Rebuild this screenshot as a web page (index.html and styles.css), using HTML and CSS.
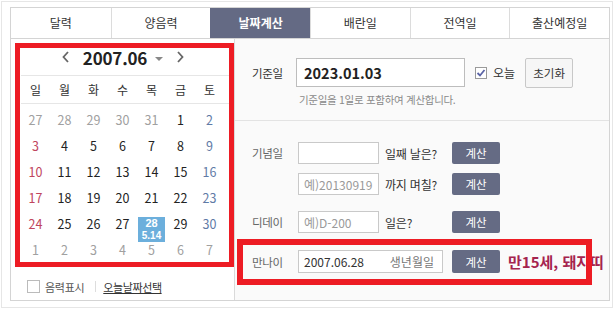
FILE: index.html
```html
<!DOCTYPE html>
<html lang="ko">
<head>
<meta charset="utf-8">
<title>날짜계산</title>
<link rel="stylesheet" href="styles.css">
</head>
<body>
<div class="page">
  <div class="box">
    <nav class="tabs">
      <div class="tab">달력</div>
      <div class="tab">양음력</div>
      <div class="tab active">날짜계산</div>
      <div class="tab">배란일</div>
      <div class="tab">전역일</div>
      <div class="tab">출산예정일</div>
    </nav>
    <div class="main">
      <section class="cal-panel">
        <div class="cal">
          <div class="cal-head">
            <svg class="chev" width="7" height="12" viewBox="0 0 7 12"><path d="M6 1 L1.5 6 L6 11" /></svg>
            <span class="ym">2007.06</span>
            <span class="tri"></span>
            <svg class="chev" width="7" height="12" viewBox="0 0 7 12"><path d="M1 1 L5.5 6 L1 11" /></svg>
          </div>
          <div class="dow">
            <span>일</span><span>월</span><span>화</span><span>수</span><span>목</span><span>금</span><span>토</span>
          </div>
          <div class="days">
            <span class="d o">27</span><span class="d o">28</span><span class="d o">29</span><span class="d o">30</span><span class="d o">31</span><span class="d">1</span><span class="d sat">2</span>
            <span class="d sun">3</span><span class="d">4</span><span class="d">5</span><span class="d">6</span><span class="d">7</span><span class="d">8</span><span class="d sat">9</span>
            <span class="d sun">10</span><span class="d">11</span><span class="d">12</span><span class="d">13</span><span class="d">14</span><span class="d">15</span><span class="d sat">16</span>
            <span class="d sun">17</span><span class="d">18</span><span class="d">19</span><span class="d">20</span><span class="d">21</span><span class="d">22</span><span class="d sat">23</span>
            <span class="d sun">24</span><span class="d">25</span><span class="d">26</span><span class="d">27</span><span class="d"><span class="hl"><b>28</b><i>5.14</i></span></span><span class="d">29</span><span class="d sat">30</span>
            <span class="d o">1</span><span class="d o">2</span><span class="d o">3</span><span class="d o">4</span><span class="d o">5</span><span class="d o">6</span><span class="d o">7</span>
          </div>
        </div>
        <div class="cal-foot">
          <span class="cb"></span>
          <span class="cb-label">음력표시</span>
          <span class="sep"></span>
          <span class="link">오늘날짜선택</span>
        </div>
      </section>
      <section class="calc-panel">
        <div class="top">
          <div class="base-row">
            <span class="lbl dark">기준일</span>
            <div class="base-input">2023.01.03</div>
            <span class="cb checked"><svg width="10" height="10" viewBox="0 0 10 10"><path d="M1.5 5 L4 7.5 L8.5 2" /></svg></span>
            <span class="today">오늘</span>
            <span class="reset">초기화</span>
          </div>
          <p class="hint">기준일을 1일로 포함하여 계산합니다.</p>
        </div>
        <div class="rows">
          <div class="row">
            <span class="lbl">기념일</span>
            <div class="inp"></div>
            <span class="mid">일째 날은?</span>
            <span class="btn">계산</span>
          </div>
          <div class="row r2">
            <span class="lbl"></span>
            <div class="inp ph">예)20130919</div>
            <span class="mid">까지 며칠?</span>
            <span class="btn">계산</span>
          </div>
          <div class="row r3">
            <span class="lbl">디데이</span>
            <div class="inp ph">예)D-200</div>
            <span class="mid">일은?</span>
            <span class="btn">계산</span>
          </div>
          <div class="row r4">
            <span class="lbl">만나이</span>
            <div class="inp wide"><span>2007.06.28</span><span class="sub">생년월일</span></div>
            <span class="btn">계산</span>
            <span class="result">만15세, 돼지띠</span>
          </div>
        </div>
      </section>
    </div>
    <div class="mark mark-cal"></div>
    <div class="mark mark-age"></div>
  </div>
</div>
</body>
</html>
```
FILE: styles.css
```css
* { box-sizing: border-box; margin: 0; padding: 0; }
body {
  margin: 0;
  background: #fff;
  font-family: "Noto Sans CJK KR", "Noto Sans", sans-serif;
  color: #333;
}
.page {
  margin: 1px;
  width: 612px;
  height: 307px;
  border: 1px solid #e6e6e6;
  padding: 5px 0 0 8px;
}
.box {
  position: relative;
  width: 600px;
  height: 294px;
  border: 1px solid #d4d4d4;
  display: flex;
  flex-direction: column;
}
.tabs {
  flex: none;
  display: grid;
  grid-template-columns: repeat(6, 1fr);
  height: 31px;
  border-bottom: 1px solid #d4d4d4;
}
.tab {
  display: flex;
  align-items: center;
  justify-content: center;
  font-size: 12px;
  line-height: 1;
  color: #333;
  border-left: 1px solid #dcdcdc;
}
.tab:first-child { border-left: 0; }
.tab.active {
  background: #646a84;
  border-left-color: #646a84;
  color: #fff;
  font-weight: 700;
}
.main { flex: 1; display: flex; min-height: 0; }

/* calendar */
.cal-panel {
  width: 224px;
  border-right: 1px solid #dadada;
  background: #fff;
  display: flex;
  flex-direction: column;
}
.cal { margin-left: 10px; width: 208px; }
.cal-head {
  height: 37px;
  border-bottom: 1px solid #e6e6e6;
  display: flex;
  align-items: center;
  justify-content: center;
  padding-right: 4px;
}
.chev path { fill: none; stroke: #666; stroke-width: 1.8; }
.ym {
  margin: 0 8px 0 14px;
  font-size: 17px;
  font-weight: 700;
  color: #222;
  line-height: 1;
  letter-spacing: -0.2px;
}
.tri {
  width: 0; height: 0;
  border-left: 4px solid transparent;
  border-right: 4px solid transparent;
  border-top: 4px solid #888;
  margin: 3px 14px 0 0;
}
.dow {
  display: grid;
  grid-template-columns: repeat(7, 29px);
  height: 28px;
  border-bottom: 1px solid #e6e6e6;
  align-items: center;
  justify-items: center;
  font-size: 12px;
  color: #333;
}
.days {
  display: grid;
  grid-template-columns: repeat(7, 29px);
  grid-auto-rows: 26px;
  padding-top: 3px;
}
.d {
  display: flex;
  justify-content: center;
  align-items: flex-start;
  font-size: 12.5px;
  line-height: 26px;
  color: #222;
}
.d.o { color: #a0a0a0; }
.d.sun { color: #c0455d; }
.d.sat { color: #5f7aa6; }
.hl {
  margin-top: 6px;
  width: 27px;
  height: 25px;
  background: #6cafdc;
  color: #fff;
  display: flex;
  flex-direction: column;
  align-items: center;
  font-family: "Liberation Sans", sans-serif;
  font-weight: 700;
}
.hl b { display: block; font-size: 11px; line-height: 12.5px; }
.hl i { display: block; font-style: normal; font-size: 10px; line-height: 11.5px; }
.cal-foot {
  margin-top: auto;
  height: 27px;
  display: flex;
  align-items: center;
  padding-left: 16px;
  font-size: 11px;
  color: #555;
}
.cb {
  width: 13px;
  height: 13px;
  border: 1px solid #bbb;
  background: #fff;
  flex: none;
}
.cb-label { margin-left: 5px; letter-spacing: -0.3px; }
.sep { width: 1px; height: 11px; background: #ddd; margin: 0 7px 0 11px; }
.link { text-decoration: underline; color: #333; letter-spacing: -0.4px; }

/* calculator */
.calc-panel { flex: 1; background: #fafafa; }
.top {
  height: 82px;
  border-bottom: 1px solid #e3e3e3;
  padding: 19px 0 0 17px;
}
.base-row { display: flex; align-items: center; height: 29px; }
.lbl {
  width: 46px;
  flex: none;
  font-size: 11.5px;
  letter-spacing: -0.3px;
  color: #666;
}
.lbl.dark { width: 44px; color: #333; }
.base-input {
  width: 169px;
  height: 29px;
  border: 1px solid #bdbdbd;
  background: #fff;
  padding-left: 7px;
  display: flex;
  align-items: center;
  font-size: 14.5px;
  font-weight: 700;
  color: #222;
}
.cb.checked {
  width: 12px;
  height: 12px;
  margin-left: 10px;
  border-color: #9a9a9a;
  display: flex;
  align-items: center;
  justify-content: center;
}
.cb.checked path { fill: none; stroke: #5b64a6; stroke-width: 1.8; }
.today { margin-left: 6px; font-size: 12px; color: #333; }
.reset {
  margin-left: 10px;
  width: 48px;
  height: 30px;
  border: 1px solid #c8c8c8;
  border-radius: 2px;
  background: #f6f6f6;
  display: flex;
  align-items: center;
  justify-content: center;
  font-size: 11.5px;
  color: #333;
}
.hint {
  margin: 6px 0 0 47px;
  font-size: 10.5px;
  line-height: 14px;
  color: #8a8a8a;
  letter-spacing: -0.3px;
}
.rows { padding: 21px 0 0 17px; }
.row { display: flex; align-items: center; height: 22px; }
.row.r2 { margin-top: 9px; }
.row.r3 { margin-top: 16px; }
.row.r4 { margin-top: 17px; height: 23px; }
.inp {
  width: 81px;
  height: 22px;
  border: 1px solid #c9c9c9;
  background: #fff;
  padding-left: 5px;
  display: flex;
  align-items: center;
  font-size: 12px;
  color: #9a9a9a;
  white-space: nowrap;
  overflow: hidden;
}
.inp.wide {
  width: 145px;
  height: 23px;
  padding-right: 8px;
  justify-content: space-between;
  color: #333;
}
.inp .sub { color: #777; }
.mid {
  width: 73px;
  padding-left: 6px;
  font-size: 12px;
  color: #333;
  letter-spacing: -0.2px;
}
.btn {
  width: 48px;
  height: 22px;
  flex: none;
  border-radius: 2px;
  background: #656b84;
  color: #fff;
  font-size: 11.5px;
  display: flex;
  align-items: center;
  justify-content: center;
}
.row.r4 .btn { margin-left: 9px; height: 23px; }
.result {
  margin-left: 8px;
  font-size: 15px;
  font-weight: 700;
  color: #a5234e;
  white-space: nowrap;
}

/* annotation marks */
.mark {
  position: absolute;
  border-style: solid;
  border-color: #ed1c24;
  pointer-events: none;
}
.mark-cal { left: 4px; top: 35px; width: 219px; height: 224px; border-width: 5px; }
.mark-age { left: 226px; top: 231px; width: 355px; height: 46px; border-width: 6px; }
```
